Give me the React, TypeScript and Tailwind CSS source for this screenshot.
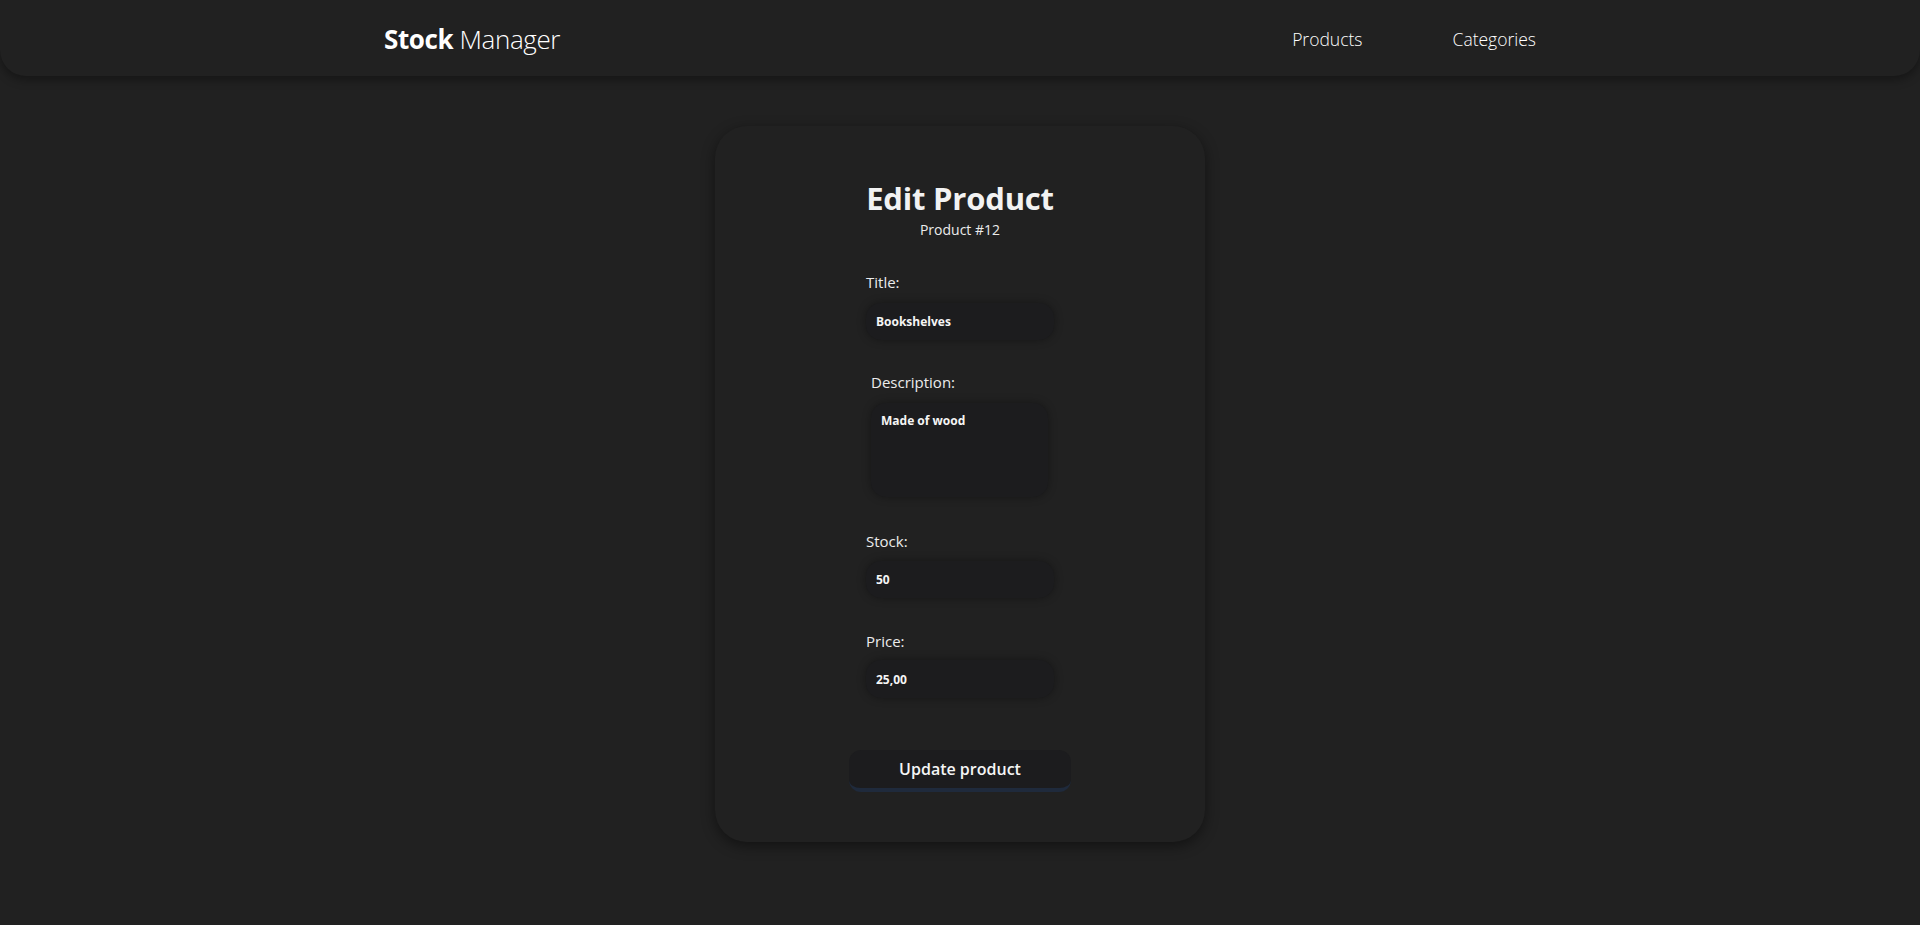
import React from "react";

export default function App() {
  return (
    <div
      className="min-h-[925px] w-full bg-[#212121] text-[#f2f2f2]"
      style={{ fontFamily: '"Open Sans", "Noto Sans", sans-serif' }}
    >
      <header className="h-[76px] w-full rounded-b-[26px] bg-[#212121] shadow-[0_4px_10px_rgba(0,0,0,0.35)] flex items-center justify-between px-[384px]">
        <div className="text-[26px] leading-[32px] mt-[2px] tracking-[-0.4px] text-white">
          <span className="font-bold">Stock</span>{" "}
          <span className="font-light">Manager</span>
        </div>
        <nav className="flex items-center gap-[90px] text-[17.5px] font-light leading-[24px] mt-[2px]">
          <a className="text-white">Products</a>
          <a className="text-white">Categories</a>
        </nav>
      </header>

      <main className="flex justify-center pt-[50px]">
        <div className="w-[490px] h-[716px] rounded-[32px] bg-[#212121] shadow-[0_4px_14px_rgba(0,0,0,0.45)] flex flex-col items-center pt-[52px]">
          <h1 className="text-[31px] leading-[40px] font-bold text-[#f2f2f2] tracking-[-0.2px]">Edit Product</h1>
          <p className="mt-[2px] text-[14px] leading-[20px] font-normal text-[#ececec]">Product #12</p>

          <form className="w-[188px] flex flex-col mt-[30px]">
            <label className="text-[15px] leading-[24px] text-[#ececec]">Title:</label>
            <input
              readOnly
              value="Bookshelves"
              className="mt-[9px] h-[37px] w-[188px] rounded-[15px] bg-[#1c1c1e] px-[10px] text-[12px] font-bold text-[#f5f5f5] outline-none shadow-[0_0_8px_rgba(0,0,0,0.35)]"
            />

            <label className="mt-[30px] ml-[5px] text-[15px] leading-[24px] text-[#ececec]">Description:</label>
            <textarea
              readOnly
              value="Made of wood"
              className="mt-[9px] ml-[5px] h-[94px] w-[177px] resize-none rounded-[15px] bg-[#1c1c1e] px-[10px] pt-[8px] text-[12px] leading-[20px] font-bold text-[#f5f5f5] outline-none shadow-[0_0_8px_rgba(0,0,0,0.35)]"
            />

            <label className="mt-[32px] text-[15px] leading-[24px] text-[#ececec]">Stock:</label>
            <input
              readOnly
              value="50"
              className="mt-[8px] h-[37px] w-[188px] rounded-[15px] bg-[#1c1c1e] px-[10px] text-[12px] font-bold text-[#f5f5f5] outline-none shadow-[0_0_8px_rgba(0,0,0,0.35)]"
            />

            <label className="mt-[31px] text-[15px] leading-[24px] text-[#ececec]">Price:</label>
            <input
              readOnly
              value="25,00"
              className="mt-[7px] h-[38px] w-[188px] rounded-[15px] bg-[#1c1c1e] px-[10px] text-[12px] font-bold text-[#f5f5f5] outline-none shadow-[0_0_8px_rgba(0,0,0,0.35)]"
            />
          </form>

          <button
            type="button"
            className="mt-[52px] h-[42px] w-[222px] rounded-[12px] bg-[#1c1c1e] border-b-[4px] border-[#1f2a3c] text-[16px] font-semibold text-[#f5f5f5] leading-[24px]"
          >
            Update product
          </button>
        </div>
      </main>
    </div>
  );
}
